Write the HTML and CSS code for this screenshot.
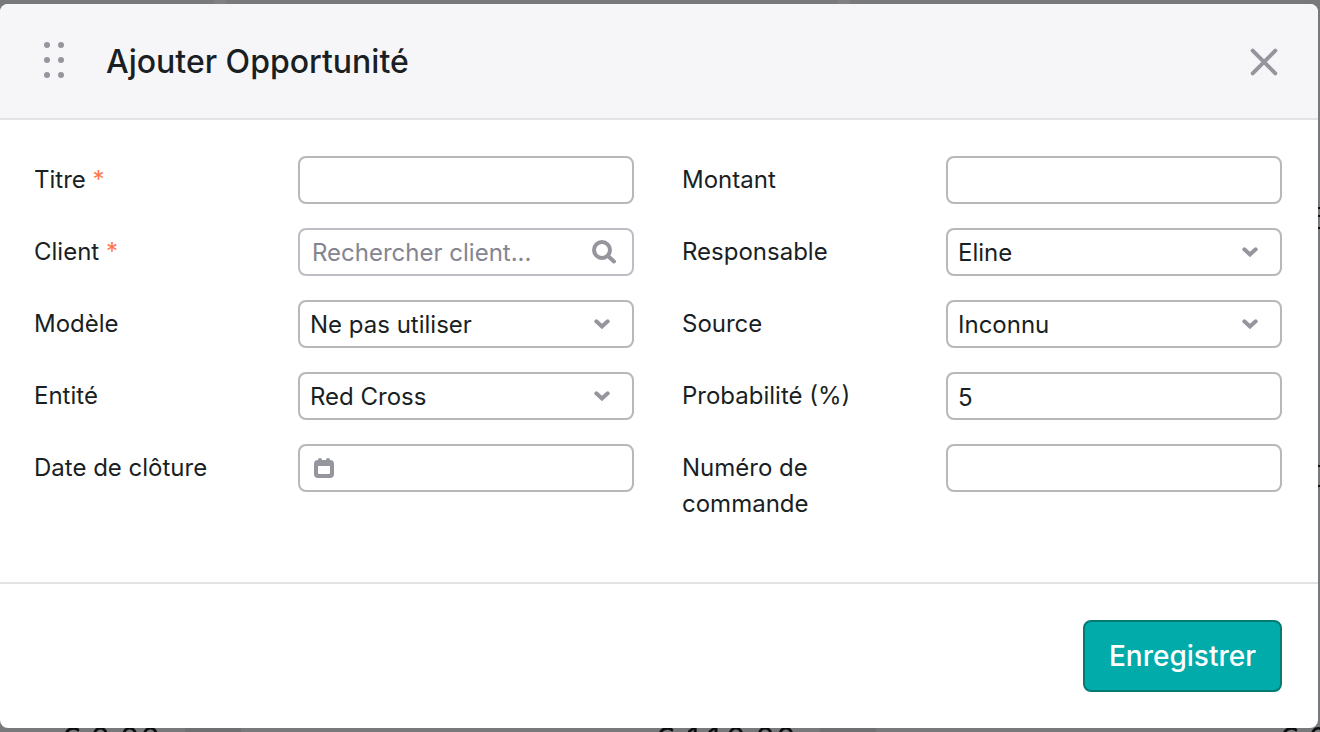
FILE: index.html
```
<!DOCTYPE html>
<html lang="fr">
<head>
    <meta charset="UTF-8">
    <meta name="viewport" content="width=device-width, initial-scale=1.0">
    <title>Ajouter Opportunité</title>
    <link rel="stylesheet" href="styles.css">
</head>
<body>
    <div class="board" aria-hidden="true">
        <div class="board-column"><span class="amount">€ 0,00</span><span class="count"></span></div>
        <div class="board-column"><span class="amount">€ 110,00</span><span class="count"></span></div>
        <div class="board-column"><span class="amount">€ 0,00</span></div>
    </div>

    <form class="modal" role="dialog" aria-labelledby="modal-title">
        <header class="modal-header">
            <svg class="drag-handle" width="20" height="40" viewBox="0 0 20 40" fill="currentColor" aria-hidden="true">
                <circle cx="3" cy="3" r="3"/><circle cx="17" cy="3" r="3"/>
                <circle cx="3" cy="18" r="3"/><circle cx="17" cy="18" r="3"/>
                <circle cx="3" cy="33" r="3"/><circle cx="17" cy="33" r="3"/>
            </svg>
            <h1 id="modal-title">Ajouter Opportunité</h1>
            <button type="button" class="close-button" aria-label="Fermer">
                <svg width="28" height="28" viewBox="0 0 28 28" fill="none" stroke="currentColor" stroke-width="4" stroke-linecap="round">
                    <path d="M2.700 2.700l22.600 22.600M25.300 2.700L2.700 25.300"/>
                </svg>
            </button>
        </header>

        <div class="modal-body">
            <div class="form-column">
                <div class="field">
                    <label for="titre">Titre <span class="required">*</span></label>
                    <input type="text" id="titre" class="control">
                </div>
                <div class="field">
                    <label for="client">Client <span class="required">*</span></label>
                    <div class="control search-control">
                        <input type="text" id="client" placeholder="Rechercher client...">
                        <svg width="24" height="24" viewBox="0 0 24 24" fill="none" stroke="currentColor" stroke-width="4" stroke-linecap="round" aria-hidden="true">
                            <circle cx="10" cy="10" r="8"/>
                            <path d="M16 16l6 5.500"/>
                        </svg>
                    </div>
                </div>
                <div class="field">
                    <label for="modele">Modèle</label>
                    <select id="modele" class="control">
                        <option>Ne pas utiliser</option>
                    </select>
                </div>
                <div class="field">
                    <label for="entite">Entité</label>
                    <select id="entite" class="control">
                        <option>Red Cross</option>
                    </select>
                </div>
                <div class="field">
                    <label for="date-cloture">Date de clôture</label>
                    <div class="control date-control">
                        <svg width="20" height="20" viewBox="0 0 20 20" fill="currentColor" aria-hidden="true">
                            <path fill-rule="evenodd" d="M4 2a2 2 0 0 1 4 0h4a2 2 0 0 1 4 0a4 4 0 0 1 4 4v10a4 4 0 0 1-4 4H4a4 4 0 0 1-4-4V6a4 4 0 0 1 4-4zM4 8v7a1 1 0 0 0 1 1h10a1 1 0 0 0 1-1V8z"/>
                        </svg>
                        <input type="text" id="date-cloture">
                    </div>
                </div>
            </div>

            <div class="form-column">
                <div class="field">
                    <label for="montant">Montant</label>
                    <input type="text" id="montant" class="control">
                </div>
                <div class="field">
                    <label for="responsable">Responsable</label>
                    <select id="responsable" class="control">
                        <option>Eline</option>
                    </select>
                </div>
                <div class="field">
                    <label for="source">Source</label>
                    <select id="source" class="control">
                        <option>Inconnu</option>
                    </select>
                </div>
                <div class="field">
                    <label for="probabilite">Probabilité (%)</label>
                    <input type="text" id="probabilite" class="control" value="5">
                </div>
                <div class="field">
                    <label for="numero">Numéro de commande</label>
                    <input type="text" id="numero" class="control">
                </div>
            </div>
        </div>

        <footer class="modal-footer">
            <button type="submit" class="save-button">Enregistrer</button>
        </footer>
    </form>
</body>
</html>
```
FILE: styles.css
```
* {
    box-sizing: border-box;
}

body {
    margin: 0;
    padding: 4px 2px 4px 0;
    min-height: 100vh;
    background-color: #78797b;
    color: #1a1f24;
    font-family: Inter, sans-serif;
    font-size: 24px;
    line-height: 36px;
}

/* Pipeline behind the modal */
.board {
    position: fixed;
    inset: 0;
    display: grid;
    grid-template-columns: 594px 624px 1fr;
    align-items: end;
    padding-left: 60px;
    overflow: hidden;
    /* gaps between the columns, edge of the card on the right */
    background-image:
        linear-gradient(#808080, #808080),
        linear-gradient(#808080, #808080),
        linear-gradient(#111 2px, transparent 2px 8px, #111 8px 10px, transparent 10px 20px, #111 20px),
        linear-gradient(#111 2px, transparent 2px 20px, #111 20px);
    background-repeat: no-repeat;
    background-size: 12px 4px, 12px 4px, 2px 22px, 2px 22px;
    background-position: 214px 0, 838px 0, right 0 top 207px, right 0 top 465px;
}

.board-column {
    display: flex;
    gap: 24px;
    height: 8px;
    overflow: hidden;
    white-space: nowrap;
}

.amount {
    font-size: 32px;
    line-height: 32px;
    font-variant-numeric: tabular-nums;
    color: #0b0e10;
}

.count {
    width: 56px;
    background-color: #6e7072;
}

.modal {
    position: relative;
    background-color: #fff;
    border-radius: 8px;
    overflow: hidden;
}

.modal-header {
    display: flex;
    align-items: center;
    gap: 42px;
    padding: 34px 40px 32px 44px;
    background-color: #f6f6f9;
    border-bottom: 2px solid #e3e3e4;
}

.drag-handle {
    flex: none;
    color: #95959e;
}

h1 {
    flex: 1;
    margin: 0;
    font-size: 32px;
    line-height: 48px;
    font-weight: 500;
}

.close-button {
    display: flex;
    padding: 0;
    border: none;
    background: none;
    color: #95959e;
    cursor: pointer;
}

.modal-body {
    display: grid;
    grid-template-columns: 1fr 1fr;
    gap: 48px;
    padding: 36px 36px 54px 34px;
}

.form-column {
    display: flex;
    flex-direction: column;
    gap: 24px;
}

.field {
    display: grid;
    grid-template-columns: minmax(0, 11fr) minmax(0, 14fr);
    align-items: start;
}

.field label {
    padding: 6px 48px 6px 0;
}

.required {
    color: #ff7849;
}

.control {
    width: 100%;
    height: 48px;
    padding: 2px 10px 0;
    border: 2px solid #b8b8b9;
    border-radius: 8px;
    background-color: #fff;
    color: inherit;
    font: inherit;
}

select.control {
    appearance: none;
    background-image: url("data:image/svg+xml,%3Csvg xmlns='http://www.w3.org/2000/svg' width='16' height='10' fill='none' stroke='%2395959e' stroke-width='4' stroke-linecap='round'%3E%3Cpath d='M2.3 2.3L8 7.5l5.7-5.2'/%3E%3C/svg%3E");
    background-repeat: no-repeat;
    background-position: right 22px center;
    cursor: pointer;
}

.search-control,
.date-control {
    display: flex;
    align-items: center;
    gap: 12px;
    padding: 0 16px 0 12px;
}

.search-control {
    border-color: #bdbdc6;
}

.search-control input,
.date-control input {
    flex: 1;
    min-width: 0;
    padding: 2px 0 0;
    border: none;
    outline: none;
    background: none;
    color: inherit;
    font: inherit;
}

.search-control input::placeholder {
    color: #85858f;
    opacity: 1;
}

.search-control svg,
.date-control svg {
    flex: none;
    color: #95959e;
}

.date-control {
    padding-left: 14px;
}

.modal-footer {
    display: flex;
    justify-content: flex-end;
    padding: 36px;
    border-top: 2px solid #e3e3e4;
}

.save-button {
    padding: 16px 24px;
    border: 2px solid #067a73;
    border-radius: 8px;
    background-color: #00abaa;
    color: #fff;
    font-family: inherit;
    font-size: 28px;
    line-height: 36px;
    font-weight: 500;
    cursor: pointer;
}
```
